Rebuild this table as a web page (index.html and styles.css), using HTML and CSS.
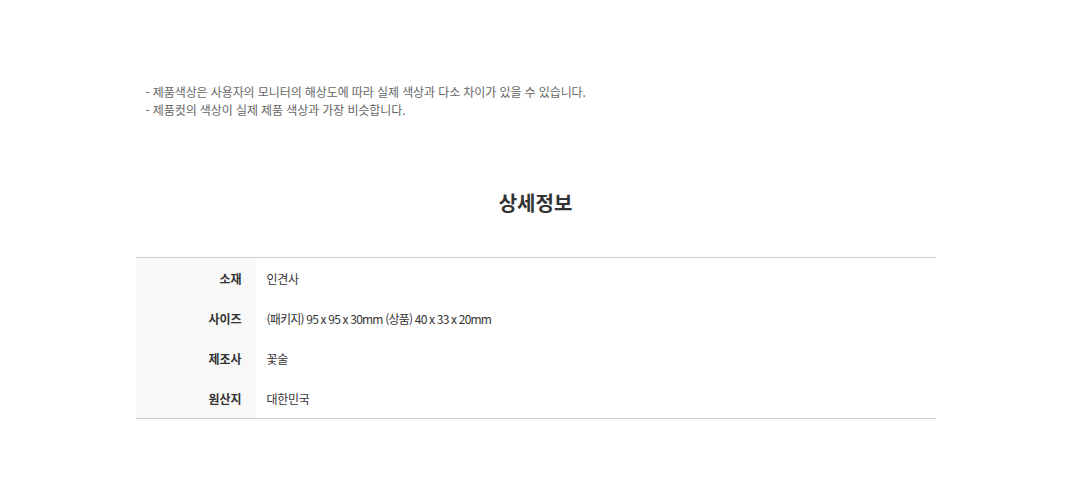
FILE: index.html
```html
<!DOCTYPE html>
<html lang="ko">
<head>
  <meta charset="UTF-8">
  <title>상세정보</title>
  <link rel="stylesheet" href="styles.css">
</head>
<body>
  <div class="detail">
    <ul class="notice">
      <li>- 제품색상은 사용자의 모니터의 해상도에 따라 실제 색상과 다소 차이가 있을 수 있습니다.</li>
      <li>- 제품컷의 색상이 실제 제품 색상과 가장 비슷합니다.</li>
    </ul>

    <h2 class="detail-title">상세정보</h2>

    <table class="info-table">
      <tr>
        <th>소재</th>
        <td>인견사</td>
      </tr>
      <tr>
        <th>사이즈</th>
        <td class="size">(패키지) 95 x 95 x 30mm (상품) 40 x 33 x 20mm</td>
      </tr>
      <tr>
        <th>제조사</th>
        <td>꽃술</td>
      </tr>
      <tr>
        <th>원산지</th>
        <td>대한민국</td>
      </tr>
    </table>
  </div>
</body>
</html>
```

FILE: styles.css
```css
body {
  margin: 0;
  font-family: "Noto Sans CJK KR", "Noto Sans", sans-serif;
  color: #333;
  background: #fff;
}

.detail {
  width: 800px;
  margin: 0 auto;
  padding-top: 83px;
}

.notice {
  list-style: none;
  margin: 0;
  padding: 0 0 0 10px;
  font-size: 12px;
  line-height: 18px;
  color: #666;
  letter-spacing: -0.1px;
}

.detail-title {
  margin: 69px 0 0;
  text-align: center;
  font-size: 20px;
  line-height: 30px;
  font-weight: 700;
  color: #333;
}

.info-table {
  width: 100%;
  margin-top: 39px;
  border-collapse: collapse;
  border-top: 1px solid #ccc;
  border-bottom: 1px solid #ccc;
  font-size: 12px;
}

.info-table th {
  width: 120px;
  height: 40px;
  padding: 0 14px 0 0;
  box-sizing: border-box;
  background: #f8f8f8;
  text-align: right;
  font-weight: 700;
  color: #333;
}

.info-table td {
  height: 40px;
  padding: 0 0 0 11px;
  color: #333;
  letter-spacing: -0.3px;
}

.info-table td.size {
  letter-spacing: -0.8px;
}
```
